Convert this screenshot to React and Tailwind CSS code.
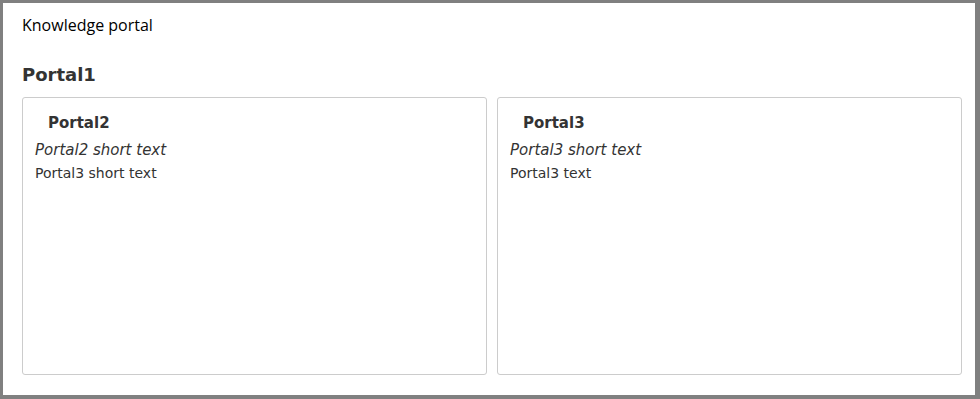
export default function App() {
  const dv = { fontFamily: '"DejaVu Sans", Verdana, sans-serif' };
  return (
    <div className="w-[980px] h-[399px] bg-[#808080] pt-[3px] pl-[3px] pr-[5px] pb-[4px]">
      <div className="w-full h-full bg-white flex flex-col pl-[19px] pr-[13px]">
        <div className="pt-[10px] text-[16px] leading-[24px] text-black" style={{ fontFamily: '"Open Sans", "Noto Sans", sans-serif' }}>
          Knowledge portal
        </div>
        <div className="mt-[27px] text-[18px] font-bold leading-[22px] text-[#333]" style={dv}>
          Portal1
        </div>
        <div className="mt-[11px] flex gap-[10px] h-[278px]" style={dv}>
          {[
            { t: "Portal2", s: "Portal2 short text", b: "Portal3 short text" },
            { t: "Portal3", s: "Portal3 short text", b: "Portal3 text" },
          ].map((c) => (
            <div key={c.t} className="flex-1 border border-[#cccccc] rounded-[3px] px-[12px] pt-[15px] text-[#333]">
              <div className="pl-[13px] text-[15px] font-bold leading-[20px]">{c.t}</div>
              <div className="mt-[8px] text-[15px] italic leading-[18px]">{c.s}</div>
              <div className="mt-[6px] text-[14px] leading-[17px]">{c.b}</div>
            </div>
          ))}
        </div>
      </div>
    </div>
  );
}
